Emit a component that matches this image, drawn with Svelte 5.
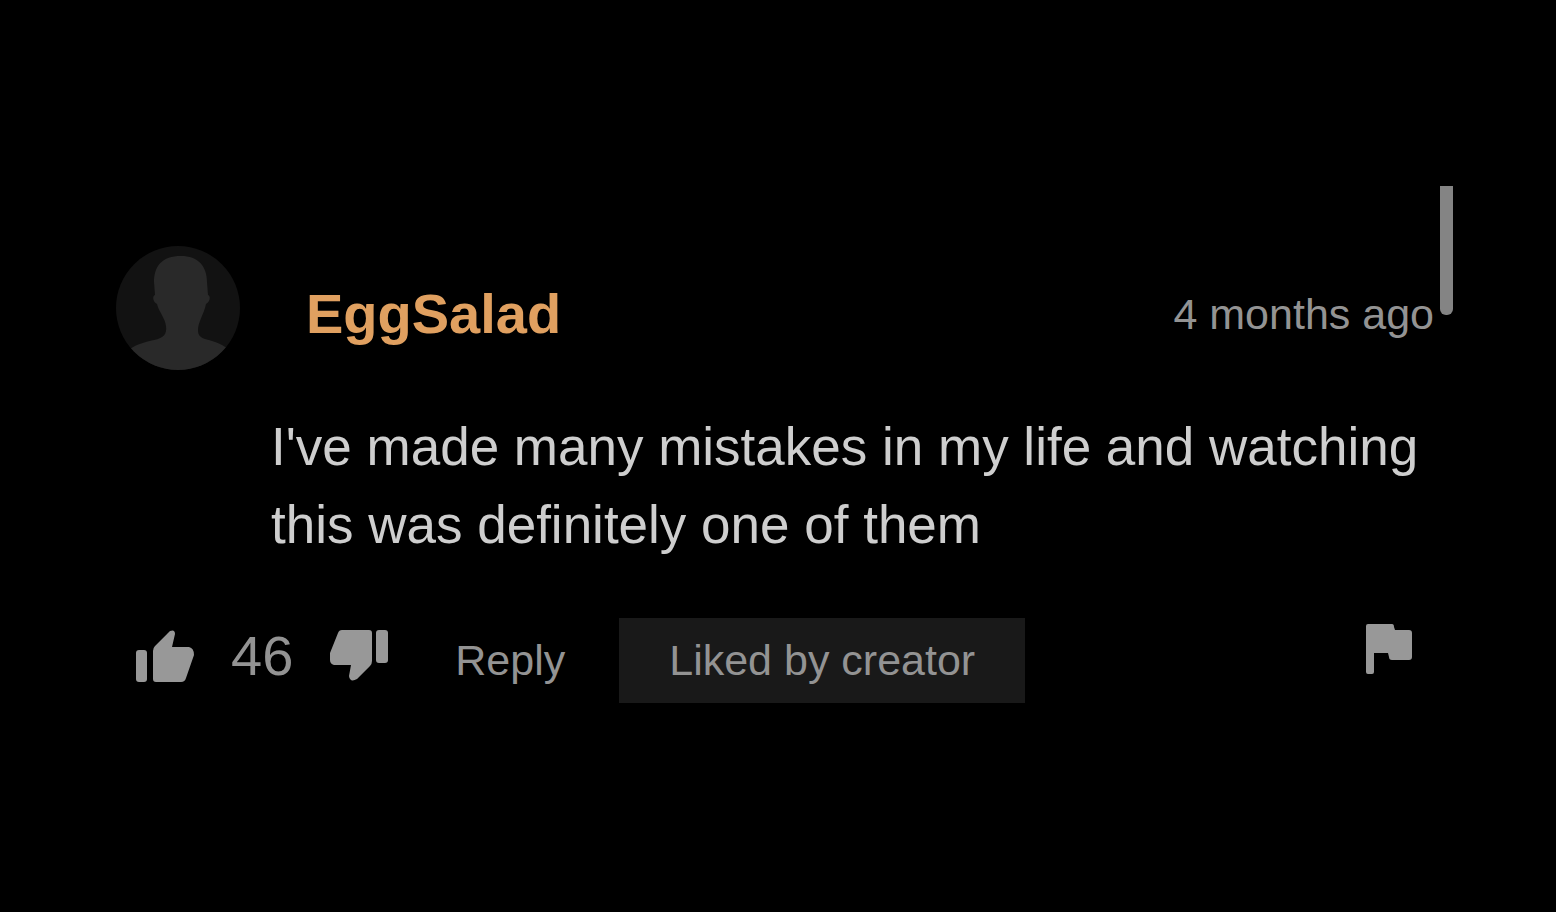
<script>
	let likes = 46;
	let vote = 0;

	const castVote = (value) => {
		// clicking the same thumb again takes the vote back
		vote = vote === value ? 0 : value;
	};

	$: total = likes + (vote === 1 ? 1 : 0);
</script>

<style>
	:global(body) {
		margin: 0;
		background-color: #000;
	}

	.page {
		display: flex;
		align-items: center;
		box-sizing: border-box;
		min-height: 100vh;
		padding: 0 103px 0 116px;
		font-family: "Liberation Sans", Arial, sans-serif;
		font-size: 43px;
		color: #939393;
	}

	.panel {
		display: flex;
		gap: 6px;
		width: 100%;
	}

	.comment {
		flex: 1;
		padding: 60px 0 23px;
	}

	.scroll-thumb {
		flex: none;
		width: 13px;
		height: 129px;
		border-radius: 0 0 6px 6px;
		background-color: #848484;
	}

	.header {
		display: flex;
		align-items: flex-start;
		gap: 66px;
	}

	.avatar {
		flex: none;
		width: 124px;
		height: 124px;
	}

	.meta {
		display: flex;
		flex: 1;
		align-items: center;
		justify-content: space-between;
		box-sizing: border-box;
		height: 124px;
		padding-top: 12px;
	}

	.author {
		font-size: 56px;
		font-weight: bold;
		line-height: 64px;
		color: #e0a060;
		text-decoration: none;
	}

	.text {
		margin: 38px 0 54px 155px;
		font-size: 53px;
		line-height: 78px;
		color: #cecece;
	}

	.actions {
		display: flex;
		align-items: center;
	}

	.votes {
		display: flex;
		align-items: center;
		gap: 37px;
		padding: 0 67px 10px 20px;
	}

	.count {
		font-size: 56px;
		line-height: 64px;
	}

	button {
		padding: 0;
		border: 0;
		background: none;
		font: inherit;
		color: inherit;
		cursor: pointer;
	}

	button svg {
		display: block;
		fill: #989898;
	}

	.badge {
		margin-left: 54px;
		padding: 0 50px;
		line-height: 85px;
		background-color: #191919;
	}

	.flag {
		align-self: flex-start;
		margin-left: auto;
		padding: 6px 22px 0 0;
	}
</style>

<main class="page">
	<div class="panel">
		<article class="comment">
			<header class="header">
				<svg class="avatar" viewBox="0 0 124 124" aria-hidden="true">
					<clipPath id="avatar-clip"><circle cx="62" cy="62" r="62" /></clipPath>
					<g clip-path="url(#avatar-clip)">
						<rect width="124" height="124" fill="#121212" />
						<path
							fill="#292929"
							d="M65 10C46 10 38 20 38 36L39 49C36 50 37 56 41 58C43 66 49 72 50 80C51 88 48 92 38 94C29 96 21 98 14 103V124H112V103C105 97 96 95 89 93C83 91 82 88 82 84C82 76 88 68 90 58C94 56 95 50 92 49L91 36C91 20 82 10 65 10Z"
						/>
					</g>
				</svg>
				<div class="meta">
					<a class="author" href="#author">EggSalad</a>
					<time>4 months ago</time>
				</div>
			</header>
			<p class="text">I've made many mistakes in my life and watching this was definitely one of them</p>
			<div class="actions">
				<div class="votes">
					<button aria-label="Like" on:click={() => castVote(1)}>
						<svg width="58" height="52" viewBox="0 0 58 52">
							<rect y="20" width="11" height="32" rx="3" />
							<path d="M17 21Q17 18 19 16L34 1Q39 -1 39 4L36 17H53Q58 18 58 25L50 48Q49 52 45 52H20Q17 52 17 49Z" />
						</svg>
					</button>
					<span class="count">{total}</span>
					<button aria-label="Dislike" on:click={() => castVote(-1)}>
						<svg width="58" height="52" viewBox="0 0 58 52">
							<rect x="46" width="12" height="33" rx="3" />
							<path d="M12 0H39Q42 0 42 3V31Q42 34 40 36L27 49Q20 53 19 46L21 35H4Q0 34 0 30V23L8 3Q9 0 12 0Z" />
						</svg>
					</button>
				</div>
				<button>Reply</button>
				<span class="badge">Liked by creator</span>
				<button class="flag" aria-label="Report">
					<svg width="46" height="50" viewBox="0 0 46 50">
						<path d="M2 0H26Q28 0 28 3L29 6H43Q46 6 46 9V33Q46 36 43 36H26Q23 36 23 33L22 29H8V48Q8 50 6 50H2Q0 50 0 48V2Q0 0 2 0Z" />
					</svg>
				</button>
			</div>
		</article>
		<div class="scroll-thumb"></div>
	</div>
</main>
